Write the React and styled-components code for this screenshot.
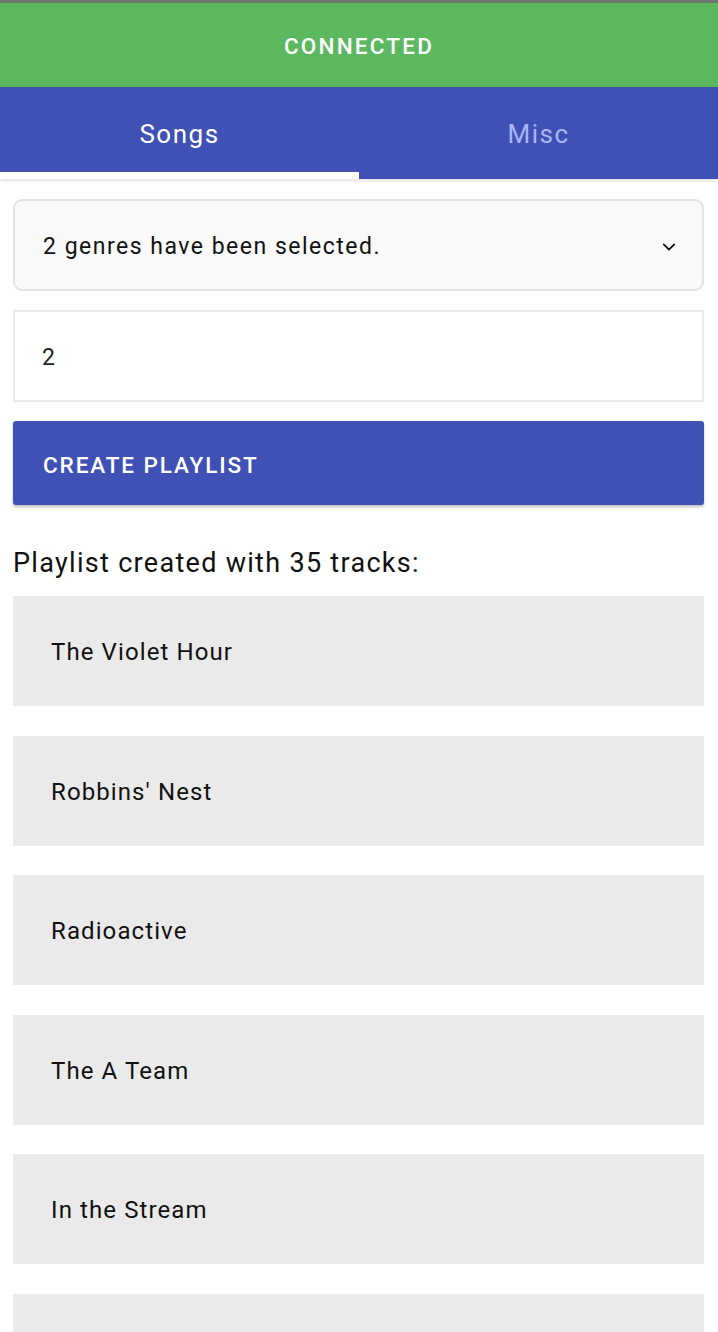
import React, { useState } from "react";
import styled, { createGlobalStyle } from "styled-components";

const tracks = [
  "The Violet Hour",
  "Robbins' Nest",
  "Radioactive",
  "The A Team",
  "In the Stream",
  "",
];

const GlobalStyle = createGlobalStyle`
  * { box-sizing: border-box; }
  body {
    margin: 0;
    background: #fff;
    font-family: Roboto, "Noto Sans", sans-serif;
    color: #111;
  }
`;

const App = () => {
  const [tab, setTab] = useState(0);

  return (
    <Page>
      <GlobalStyle />
      <TopStrip />
      <StatusBar>CONNECTED</StatusBar>
      <Tabs>
        <Tab $active={tab === 0} onClick={() => setTab(0)}>
          Songs
        </Tab>
        <Tab $active={tab === 1} onClick={() => setTab(1)}>
          Misc
        </Tab>
      </Tabs>
      <Content>
        <Select>
          <span>2 genres have been selected.</span>
          <svg width="18" height="18" viewBox="0 0 24 24" fill="none">
            <path
              d="M5 8.5l7 7 7-7"
              stroke="#111"
              strokeWidth="2.4"
              strokeLinecap="round"
              strokeLinejoin="round"
            />
          </svg>
        </Select>
        <NumberField>2</NumberField>
        <CreateButton>CREATE PLAYLIST</CreateButton>
        <Summary>Playlist created with 35 tracks:</Summary>
        <TrackList>
          {tracks.map((t, i) => (
            <Track key={i}>{t}</Track>
          ))}
        </TrackList>
      </Content>
    </Page>
  );
};

const Page = styled.div`
  width: 718px;
  height: 1332px;
  overflow: hidden;
`;

const TopStrip = styled.div`
  height: 3px;
  background: #747474;
`;

const StatusBar = styled.div`
  height: 84px;
  background: #5cb85f;
  color: #fff;
  display: flex;
  align-items: center;
  justify-content: center;
  padding-top: 2px;
  font-size: 22.5px;
  font-weight: 500;
  letter-spacing: 2.2px;
`;

const Tabs = styled.div`
  display: flex;
  height: 92px;
  background: #3f51b5;
  box-shadow: 0 2px 3px rgba(0, 0, 0, 0.12);
`;

const Tab = styled.div`
  flex: 1;
  display: flex;
  align-items: center;
  justify-content: center;
  padding-top: 8px;
  font-size: 26px;
  letter-spacing: 1.5px;
  color: ${(p) => (p.$active ? "#fff" : "#a8b6f7")};
  border-bottom: 7px solid ${(p) => (p.$active ? "#fff" : "transparent")};
  cursor: pointer;
`;

const Content = styled.div`
  padding: 20px 14px 0 13px;
  display: flex;
  flex-direction: column;
`;

const Select = styled.div`
  height: 92px;
  background: #f9f9f9;
  border: 2px solid #e2e2e2;
  border-radius: 9px;
  display: flex;
  align-items: center;
  justify-content: space-between;
  padding: 3px 24px 0 28px;
  font-size: 23px;
  letter-spacing: 1.5px;
`;

const NumberField = styled.div`
  margin-top: 19px;
  height: 92px;
  border: 2px solid #ebebeb;
  display: flex;
  align-items: center;
  padding: 2px 0 0 27px;
  font-size: 23px;
  color: #222;
`;

const CreateButton = styled.button`
  margin-top: 19px;
  height: 84px;
  border: none;
  border-radius: 3px;
  background: #3f51b5;
  color: #fff;
  font-family: Roboto, sans-serif;
  font-size: 22.5px;
  font-weight: 500;
  letter-spacing: 1.9px;
  text-align: left;
  padding: 3px 0 0 30px;
  box-shadow: 0 2px 3px rgba(0, 0, 0, 0.25);
`;

const Summary = styled.div`
  margin-top: 42px;
  font-size: 27px;
  letter-spacing: 1.3px;
  color: #111;
  line-height: 32px;
`;

const TrackList = styled.div`
  margin-top: 17px;
  display: flex;
  flex-direction: column;
  gap: 29.5px;
`;

const Track = styled.div`
  height: 110px;
  flex-shrink: 0;
  background: #eaeaea;
  display: flex;
  align-items: center;
  padding: 2px 0 0 38px;
  font-size: 24px;
  letter-spacing: 1.1px;
  color: #111;
`;

export default App;
